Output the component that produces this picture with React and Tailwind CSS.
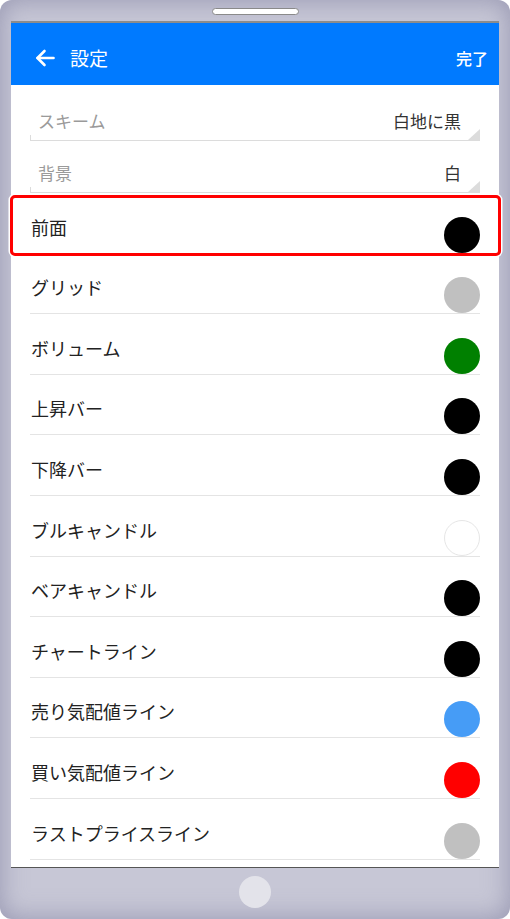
import React from "react";

const colorRows = [
  { label: "前面", color: "bg-[#000000]", active: true },
  { label: "グリッド", color: "bg-[#c0c0c0]" },
  { label: "ボリューム", color: "bg-[#008000]" },
  { label: "上昇バー", color: "bg-[#000000]" },
  { label: "下降バー", color: "bg-[#000000]" },
  { label: "ブルキャンドル", color: "bg-white border border-[#e6e6e6]" },
  { label: "ベアキャンドル", color: "bg-[#000000]" },
  { label: "チャートライン", color: "bg-[#000000]" },
  { label: "売り気配値ライン", color: "bg-[#469cf6]" },
  { label: "買い気配値ライン", color: "bg-[#ff0000]" },
  { label: "ラストプライスライン", color: "bg-[#c0c0c0]" },
];

function Spinner({ label, value }) {
  return (
    <div className="relative h-[52px] flex items-end justify-between border-b border-[#dcdcdc] pb-[7px]">
      <span className="pl-[8px] text-[17px] leading-[24px] text-[#9a9a9a]">{label}</span>
      <span className="pr-[19px] text-[17px] leading-[24px] text-[#333]">{value}</span>
      <span className="absolute left-0 bottom-0 w-px h-[5px] bg-[#dcdcdc]" />
      <svg className="absolute right-0 bottom-0" width="12" height="11" viewBox="0 0 12 11">
        <polygon points="12,0 12,11 0,11" fill="#dcdcdc" />
      </svg>
    </div>
  );
}

function ColorRow({ label, color, active }) {
  return (
    <div className="relative h-[60.6px] flex items-end justify-between border-b border-[#e4e4e4]">
      <span className="pl-px pb-[14px] text-[18px] leading-[24px] text-[#222]">{label}</span>
      <span className={`w-[36px] h-[36px] rounded-full ${color}`} />
      {active && (
        <div className="absolute -left-[20px] -right-[21px] top-[1.5px] -bottom-[3px] rounded-[5px] border-[3px] border-[#ff0000] shadow-[0_0_0_1.5px_#ffffff]" />
      )}
    </div>
  );
}

export default function App() {
  return (
    <div
      className="w-[510px] h-[919px] rounded-[12px] bg-[#c7c7d6] shadow-[inset_0_0_26px_rgba(110,110,145,0.55)] flex flex-col"
      style={{ fontFamily: '"Noto Sans CJK JP", "Noto Sans", sans-serif' }}
    >
      {/* top bezel */}
      <div className="h-[21px] flex justify-center pt-[8px]">
        <div className="w-[87px] h-[7px] rounded-full bg-white border border-[#8a8a8a]" />
      </div>

      {/* screen */}
      <div className="mx-[11px] h-[847px] flex flex-col bg-white border-t-[2px] border-t-[#8c8c8c] border-b border-b-[#555]">
        <header className="h-[62px] bg-[#007aff] flex items-center justify-between pl-[24px] pr-[11px] pt-[7px] text-white">
          <div className="flex items-center gap-[15px]">
            <svg width="20" height="18" viewBox="0 0 20 18" fill="none" stroke="white" strokeWidth="2.6" strokeLinecap="round" strokeLinejoin="round">
              <path d="M18.5 9H2.5" />
              <path d="M9.5 2L2.5 9l7 7" />
            </svg>
            <span className="text-[19px] leading-[24px]">設定</span>
          </div>
          <span className="text-[16px] leading-[22px] font-medium">完了</span>
        </header>

        <div className="px-[19px] pt-[4px]">
          <Spinner label="スキーム" value="白地に黒" />
          <Spinner label="背景" value="白" />
          {colorRows.map((row) => (
            <ColorRow key={row.label} {...row} />
          ))}
        </div>
      </div>

      {/* bottom bezel */}
      <div className="flex-1 flex justify-center pt-[8px]">
        <div className="w-[32px] h-[32px] rounded-full bg-[#e3e3ea]" />
      </div>
    </div>
  );
}
